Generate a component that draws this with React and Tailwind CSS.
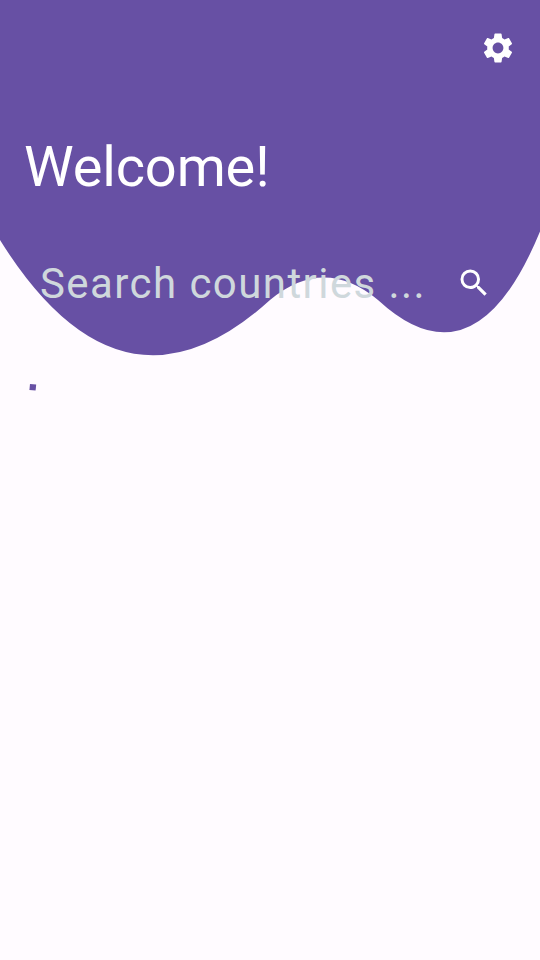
export default function App() {
  return (
    <main className="relative isolate flex h-[960px] w-[540px] flex-col overflow-hidden bg-[#fffbff] font-[Roboto,sans-serif]">
      <svg className="absolute top-0 left-0 -z-10" width="540" height="360" viewBox="0 0 540 360" fill="#6750a4" aria-hidden="true">
        <path d="M0 0V240Q121.5 435 270 300Q324 255 378 300Q475 389.5 540 231.5V0Z" />
      </svg>
      <header className="flex h-24 items-center justify-end pr-6">
        <button aria-label="Settings" className="text-white">
          <svg width="36" height="36" viewBox="0 0 24 24" fill="currentColor">
            <path d="M19.14 12.94c.04-.3.06-.61.06-.94 0-.32-.02-.64-.07-.94l2.03-1.58c.18-.14.23-.41.12-.61l-1.92-3.32c-.12-.22-.37-.29-.59-.22l-2.39.96c-.5-.38-1.03-.7-1.62-.94l-.36-2.54c-.04-.24-.24-.41-.48-.41h-3.84c-.24 0-.43.17-.47.41l-.36 2.54c-.59.24-1.13.57-1.62.94l-2.39-.96c-.22-.08-.47 0-.59.22L2.74 8.87c-.12.21-.08.47.12.61l2.03 1.58c-.05.3-.09.63-.09.94s.02.64.07.94l-2.03 1.58c-.18.14-.23.41-.12.61l1.92 3.32c.12.22.37.29.59.22l2.39-.96c.5.38 1.03.7 1.62.94l.36 2.54c.05.24.24.41.48.41h3.84c.24 0 .44-.17.47-.41l.36-2.54c.59-.24 1.13-.56 1.62-.94l2.39.96c.22.08.47 0 .59-.22l1.92-3.32c.12-.22.07-.47-.12-.61l-2.01-1.58zM12 15.6c-1.98 0-3.6-1.62-3.6-3.6s1.62-3.6 3.6-3.6 3.6 1.62 3.6 3.6-1.62 3.6-3.6 3.6z" />
          </svg>
        </button>
      </header>
      <h1 className="mt-[38px] pl-6 text-[56px] leading-[66px] tracking-[-0.15px] text-white">Welcome!</h1>
      <div className="mt-[47px] flex h-[72px] items-center justify-between pr-12 pl-10">
        <span className="pt-0.5 text-[42px] leading-none tracking-[1.43px] whitespace-nowrap text-[#cfd8dc]">Search countries ...</span>
        <button aria-label="Search" className="text-white">
          <svg width="36" height="36" viewBox="0 0 24 24" fill="currentColor">
            <path d="M15.5 14h-.79l-.28-.27A6.471 6.471 0 0 0 16 9.5 6.5 6.5 0 1 0 9.5 16c1.61 0 3.09-.59 4.23-1.57l.27.28v.79l5 4.99L20.49 19l-4.99-5zm-6 0C7.01 14 5 11.99 5 9.5S7.01 5 9.5 5 14 7.01 14 9.5 11.99 14 9.5 14z" />
          </svg>
        </button>
      </div>
      <svg className="mt-[63px] ml-7" width="10" height="10" viewBox="0 0 10 10" fill="#6750a4" role="progressbar">
        <path d="M2 2L8.2 2.4L7.6 8.4L1.4 8Z" />
      </svg>
    </main>
  );
}
